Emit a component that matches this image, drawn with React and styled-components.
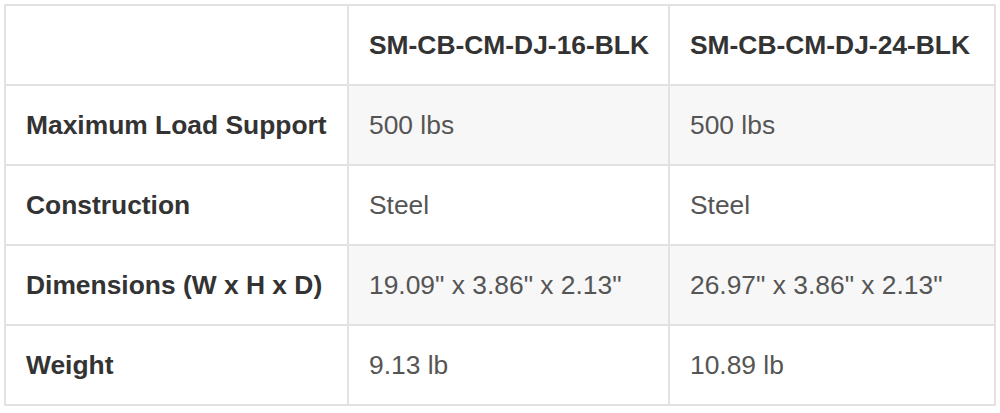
import React from "react";
import styled, { createGlobalStyle } from "styled-components";

const Global = createGlobalStyle`
  html, body { margin: 0; padding: 0; background: #ffffff; }
  body { font-family: "Liberation Sans", Arial, sans-serif; }
`;

const Page = styled.div`
  padding: 4px 0 0 4px;
`;

const Table = styled.table`
  width: 990px;
  border-collapse: collapse;
  table-layout: fixed;
  border: 2px solid #e2e2e2;
  font-size: 26.4px;
`;

const HeadCell = styled.th`
  height: 78px;
  padding: 0 0 0 20px;
  border: 2px solid #e2e2e2;
  text-align: left;
  font-weight: 700;
  color: #333333;
  background: #ffffff;
  white-space: nowrap;
`;

const LabelCell = styled.th`
  height: 78px;
  padding: 0 0 0 20px;
  border: 2px solid #e2e2e2;
  text-align: left;
  font-weight: 700;
  color: #333333;
  background: #ffffff;
  white-space: nowrap;
`;

const ValueCell = styled.td`
  height: 78px;
  padding: 0 0 0 20px;
  border: 2px solid #e2e2e2;
  color: #555555;
  background: ${(p) => (p.$striped ? "#f7f7f7" : "#ffffff")};
  white-space: nowrap;
`;

const rows = [
  ["Maximum Load Support", "500 lbs", "500 lbs"],
  ["Construction", "Steel", "Steel"],
  ["Dimensions (W x H x D)", '19.09" x 3.86" x 2.13"', '26.97" x 3.86" x 2.13"'],
  ["Weight", "9.13 lb", "10.89 lb"],
];

export default function App() {
  return (
    <Page>
      <Global />
      <Table>
        <colgroup>
          <col style={{ width: 343 }} />
          <col style={{ width: 321 }} />
          <col style={{ width: 326 }} />
        </colgroup>
        <thead>
          <tr>
            <HeadCell />
            <HeadCell>SM-CB-CM-DJ-16-BLK</HeadCell>
            <HeadCell>SM-CB-CM-DJ-24-BLK</HeadCell>
          </tr>
        </thead>
        <tbody>
          {rows.map((r, i) => (
            <tr key={r[0]}>
              <LabelCell>{r[0]}</LabelCell>
              <ValueCell $striped={i % 2 === 0}>{r[1]}</ValueCell>
              <ValueCell $striped={i % 2 === 0}>{r[2]}</ValueCell>
            </tr>
          ))}
        </tbody>
      </Table>
    </Page>
  );
}
